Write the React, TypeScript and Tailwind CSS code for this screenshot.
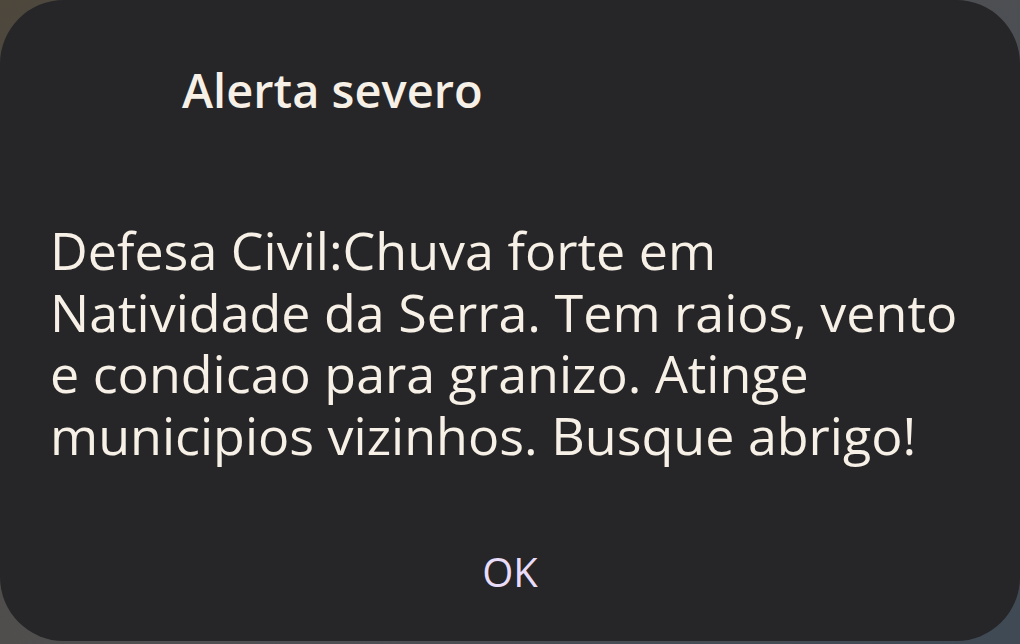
export default function App() {
  return (
    <div className="w-[1020px] h-[644px] overflow-hidden bg-[linear-gradient(135deg,#4d473c_0%,#505052_50%,#3f4a55_100%)]">
      <div
        className="h-[641px] w-full rounded-[64px] bg-[#262528] flex flex-col"
        style={{ fontFamily: "'Open Sans', 'Noto Sans', sans-serif" }}
      >
        <h1 className="pl-[182px] pt-[62px] text-[47px] leading-[56px] font-semibold text-[#f6f0e6]">
          Alerta severo
        </h1>

        <div className="pl-[50px] pr-[20px] mt-[101px] text-[52px] leading-[61.5px] text-[#f6f0e6]">
          <p>Defesa Civil:Chuva forte em</p>
          <p>Natividade da Serra. Tem raios, vento</p>
          <p>e condicao para granizo. Atinge</p>
          <p>municipios vizinhos. Busque abrigo!</p>
        </div>

        <div className="mt-auto mb-[45px] flex justify-center">
          <button className="text-[40px] leading-[48px] font-medium text-[#e8dcf8]">
            OK
          </button>
        </div>
      </div>
    </div>
  )
}
